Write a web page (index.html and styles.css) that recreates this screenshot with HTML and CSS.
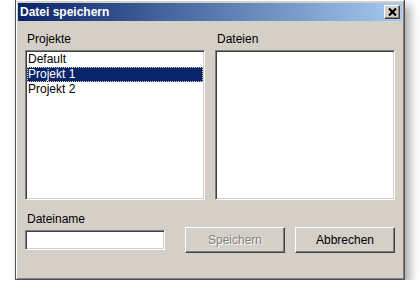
FILE: index.html
```html
<!DOCTYPE html>
<html lang="de">
<head>
  <meta charset="UTF-8">
  <title>Datei speichern</title>
  <link rel="stylesheet" href="styles.css">
</head>
<body>
  <div class="window">
    <div class="titlebar">
      <span class="title">Datei speichern</span>
      <button class="close" title="Schließen">
        <svg width="9" height="8" viewBox="0 0 9 8">
          <path d="M1 0.5l7 7M8 0.5l-7 7" stroke="#000" stroke-width="2.2" fill="none"/>
        </svg>
      </button>
    </div>

    <div class="dialog-body">
      <div class="files">
        <div class="col">
          <div class="label">Projekte</div>
          <ul class="listbox">
            <li>Default</li>
            <li class="selected">Projekt 1</li>
            <li>Projekt 2</li>
          </ul>
        </div>
        <div class="col">
          <div class="label">Dateien</div>
          <ul class="listbox"></ul>
        </div>
      </div>

      <div class="label name-label">Dateiname</div>
      <div class="save-row">
        <input class="name-input" type="text">
        <button class="btn" disabled>Speichern</button>
        <button class="btn">Abbrechen</button>
      </div>
    </div>
  </div>
</body>
</html>
```

FILE: styles.css
```css
* {
  box-sizing: border-box;
}

body {
  margin: 0;
  background: #fff;
  font-family: 'Liberation Sans', Arial, sans-serif;
  font-size: 12px;
  color: #000;
}

.window {
  width: 390px;
  height: 281px;
  margin: -1px 0 0 15px;
  padding: 3px 2px 2px 2px;
  background: #d4d0c8;
  border: 1px solid #505050;
  box-shadow: inset 1px 1px #fff, inset -1px -1px #808080, 5px 6px 10px rgba(0, 0, 0, 0.35);
}

.titlebar {
  height: 18px;
  display: flex;
  align-items: center;
  justify-content: space-between;
  padding: 0 2px;
  background: linear-gradient(to right, #0a246a, #a6caf0);
}

.title {
  color: #fff;
  font-weight: bold;
  font-size: 12px;
}

.close {
  width: 16px;
  height: 14px;
  padding: 0;
  display: flex;
  align-items: center;
  justify-content: center;
  background: #d4d0c8;
  border: 1px solid;
  border-color: #fff #404040 #404040 #fff;
  box-shadow: inset -1px -1px #808080;
}

.dialog-body {
  padding: 11px 7px 0 7px;
}

.files {
  display: grid;
  grid-template-columns: 180px 180px;
  gap: 10px;
}

.label {
  line-height: 14px;
  padding-left: 2px;
  margin-bottom: 4px;
}

.listbox {
  list-style: none;
  margin: 0;
  padding: 1px;
  height: 150px;
  background: #fff;
  border: 1px solid;
  border-color: #808080 #fff #fff #808080;
  box-shadow: inset 1px 1px #404040, inset -1px -1px #d4d0c8;
}

.listbox li {
  line-height: 15px;
  height: 15px;
  padding-left: 1px;
}

.listbox li.selected {
  background: #0a246a;
  color: #fff;
  outline: 1px dotted #e0d8a0;
  outline-offset: -1px;
}

.name-label {
  margin-top: 12px;
  margin-bottom: 1px;
}

.save-row {
  display: flex;
  align-items: center;
  gap: 10px;
}

.name-input {
  width: 140px;
  height: 20px;
  margin: 0 10px 0 0;
  padding: 1px 2px;
  font: inherit;
  background: #fff;
  border: 1px solid;
  border-color: #808080 #fff #fff #808080;
  box-shadow: inset 1px 1px #404040, inset -1px -1px #d4d0c8;
  outline: none;
}

.btn {
  width: 100px;
  height: 26px;
  padding: 0;
  font: inherit;
  color: #000;
  background: #d4d0c8;
  border: 1px solid;
  border-color: #fff #404040 #404040 #fff;
  box-shadow: inset -1px -1px #808080;
}

.btn:disabled {
  color: #808080;
  text-shadow: 1px 1px #fff;
}
```
